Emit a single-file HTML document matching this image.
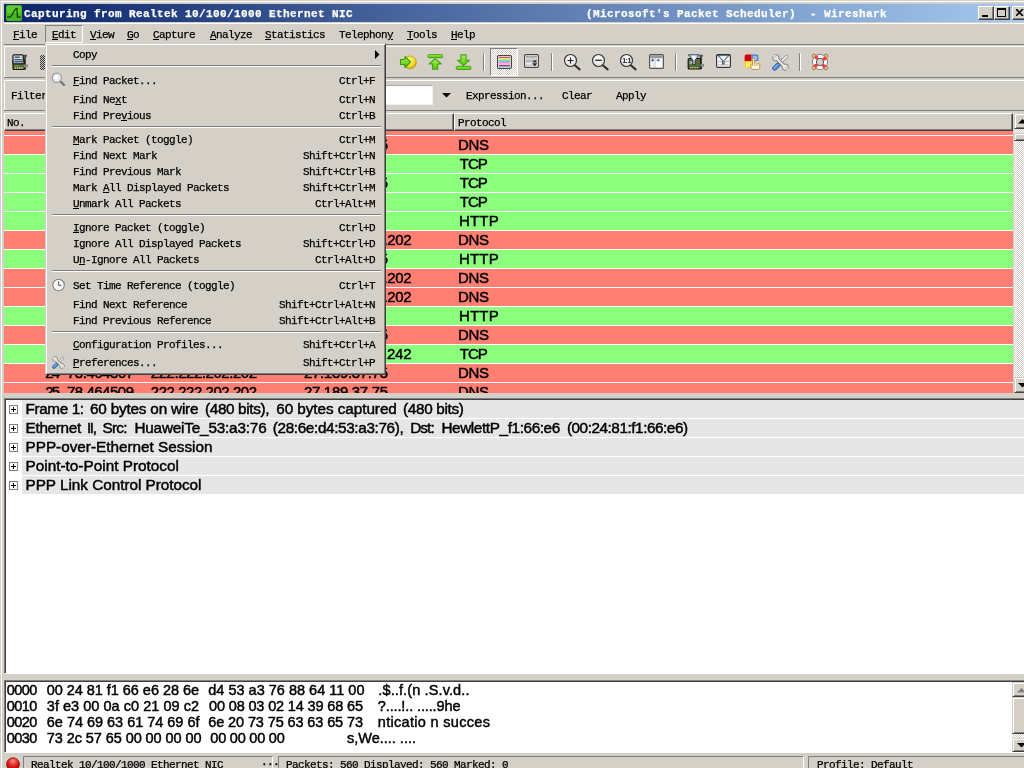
<!DOCTYPE html>
<html><head><meta charset="utf-8"><title>Wireshark</title>
<style>
*{box-sizing:border-box;margin:0;padding:0}
html,body{width:1024px;height:768px;overflow:hidden;background:#d4d0c8}
body{position:relative;font-family:"Liberation Mono",monospace;font-size:12px;color:#000}
.a{position:absolute}
.m{font-family:"Liberation Mono",monospace;font-size:11px;letter-spacing:-0.6px;white-space:pre;line-height:14px;-webkit-text-stroke:0.25px}
.s{font-family:"Liberation Sans",sans-serif;font-size:15px;white-space:pre;line-height:18px}
.h{font-family:"Liberation Sans",sans-serif;font-size:14.5px;white-space:pre;line-height:16px}
u{text-decoration:underline;text-underline-offset:1px}
.row{position:absolute;left:4px;width:1009px;height:18px}
.row span{position:absolute;top:0}
.s,.h{-webkit-text-stroke:0.45px #000}

.mi{position:absolute;left:72px;height:14px}
.sc{position:absolute;right:0;text-align:right}
.sep{position:absolute;left:5px;width:329px;height:2px;border-top:1px solid #808080;border-bottom:1px solid #fff}
.vsep{position:absolute;width:2px;height:22px;top:51px;border-left:1px solid #808080;border-right:1px solid #fff}
</style></head>
<body>
<div id="root" class="a" style="left:0;top:0;width:1024px;height:768px;overflow:hidden;will-change:transform">
<div class="a" style="left:1px;top:1px;width:1030px;height:1px;background:#fff"></div>
<div class="a" style="left:1px;top:1px;width:1px;height:767px;background:#fff"></div>
<div class="a" style="left:4px;top:4px;width:1024px;height:18px;background:linear-gradient(90deg,#0a246a,#a6caf0)"></div>
<svg class="a" style="left:6px;top:5px" width="16" height="16" viewBox="0 0 16 16"><rect x="0" y="0" width="16" height="16" rx="2" fill="#46b81f"/><rect x="1" y="1" width="14" height="7" rx="1" fill="#6fd63f" opacity=".6"/><path d="M1 12.2 L3.5 12.2 C6.5 12.2 7 4.5 11 3.4 L11.4 12.2 L15 12.2" fill="none" stroke="#103808" stroke-width="1.2" stroke-linejoin="round"/></svg>
<div class="a m" style="left:24px;top:7px;color:#fff;font-weight:bold;letter-spacing:0.4px">Capturing from Realtek 10/100/1000 Ethernet NIC</div>
<div class="a m" style="left:586px;top:7px;color:#fff;font-weight:bold;letter-spacing:0.4px">(Microsoft's Packet Scheduler)  - Wireshark</div>
<div class="a" style="left:978px;top:6px;width:16px;height:14px;background:#d4d0c8;border:1px solid;border-color:#fff #404040 #404040 #fff;box-shadow:inset -1px -1px 0 #808080"><div class="a" style="left:3px;top:8px;width:6px;height:2px;background:#000"></div></div>
<div class="a" style="left:994px;top:6px;width:16px;height:14px;background:#d4d0c8;border:1px solid;border-color:#fff #404040 #404040 #fff;box-shadow:inset -1px -1px 0 #808080"><div class="a" style="left:2px;top:1px;width:9px;height:9px;border:1px solid #000;border-top-width:2px"></div></div>
<div class="a" style="left:1012px;top:6px;width:16px;height:14px;background:#d4d0c8;border:1px solid;border-color:#fff #404040 #404040 #fff;box-shadow:inset -1px -1px 0 #808080"><svg class="a" style="left:3px;top:2px" width="8" height="7"><path d="M0 0L7 7M7 0L0 7" stroke="#000" stroke-width="1.6"/></svg></div>
<div class="a" style="left:4px;top:23px;width:1024px;height:1px;background:#fff"></div>
<div class="a" style="left:45px;top:25px;width:38px;height:18px;border:1px solid;border-color:#808080 #fff #fff #808080"></div>
<div class="a m" style="left:13px;top:28px"><u>F</u>ile</div>
<div class="a m" style="left:52px;top:28px"><u>E</u>dit</div>
<div class="a m" style="left:90px;top:28px"><u>V</u>iew</div>
<div class="a m" style="left:127px;top:28px"><u>G</u>o</div>
<div class="a m" style="left:153px;top:28px"><u>C</u>apture</div>
<div class="a m" style="left:210px;top:28px"><u>A</u>nalyze</div>
<div class="a m" style="left:265px;top:28px"><u>S</u>tatistics</div>
<div class="a m" style="left:339px;top:28px">Telephon<u>y</u></div>
<div class="a m" style="left:407px;top:28px"><u>T</u>ools</div>
<div class="a m" style="left:451px;top:28px"><u>H</u>elp</div>
<div class="a" style="left:4px;top:44px;width:1024px;height:1px;background:#808080"></div>
<div class="a" style="left:4px;top:46px;width:1024px;height:1px;background:#fff"></div>
<div class="a" style="left:4px;top:77px;width:1024px;height:1px;background:#808080"></div>
<div class="a" style="left:4px;top:80px;width:1024px;height:1px;background:#fff"></div>
<div class="a" style="left:4px;top:110px;width:1024px;height:1px;background:#808080"></div>
<div class="a" style="left:4px;top:113px;width:1024px;height:1px;background:#fff"></div>
<div class="a" style="left:4px;top:46px;width:1px;height:31px;background:#fff"></div>
<div class="a" style="left:4px;top:80px;width:1px;height:30px;background:#fff"></div>
<svg class="a" style="left:12px;top:54px" width="17" height="17" viewBox="0 0 17 17">
<path d="M11.5 1.5 L14.5 1 L14.5 2.5 L13.5 3 L13.5 15.5 L12.5 15.5 Z" fill="#555" stroke="#222" stroke-width=".6"/>
<rect x="1" y="6" width="11.5" height="9.5" rx="1" fill="#557244" stroke="#141c0e" stroke-width="1.2"/>
<rect x="12" y="10.5" width="4" height="3" fill="#8a8a8a"/>
<path d="M2.6 14H4M4.8 14H6.2M7 14H8.4M9.2 14H10.6" stroke="#e0cc50" stroke-width="1.3"/>
<rect x="2.5" y="10.5" width="5" height="1.5" fill="#7a8a4a"/>
<rect x="1" y="0.8" width="10.2" height="9" rx="1" fill="#fff" stroke="#111" stroke-width="1.2"/>
<rect x="2.6" y="2.4" width="5.2" height="1.8" fill="#555"/>
<rect x="8.6" y="2.4" width="1.2" height="1.8" fill="#888"/>
<rect x="2.2" y="5" width="8" height="1.5" fill="#2f5f9a"/>
<rect x="2.2" y="7.2" width="8" height="1.3" fill="#1c3d6a"/>
<rect x="11" y="8" width="1" height="1" fill="#d33"/>
</svg>
<div class="a" style="left:40px;top:55px;width:6px;height:15px;background:repeating-conic-gradient(#333 0% 25%,#ccc 0% 50%) 0 0/2px 2px"></div>
<svg class="a" style="left:399px;top:54px" width="19" height="17" viewBox="0 0 19 17">
<defs><radialGradient id="yg" cx=".4" cy=".35" r=".7"><stop offset="0" stop-color="#fff9a0"/><stop offset=".6" stop-color="#f0dc30"/><stop offset="1" stop-color="#c8a010"/></radialGradient>
<linearGradient id="gg" x1="0" y1="0" x2="0" y2="1"><stop offset="0" stop-color="#b8f070"/><stop offset=".5" stop-color="#7fd82a"/><stop offset="1" stop-color="#5cc010"/></linearGradient></defs>
<circle cx="11" cy="8.4" r="6.4" fill="url(#yg)" stroke="#c0a018" stroke-width=".8"/>
<path d="M1.5 5.5 L6 5.5 L6 2.5 L11.5 8 L6 13.5 L6 10.5 L1.5 10.5 Z" fill="url(#gg)" stroke="#3a9a08" stroke-width="1.1" stroke-linejoin="round"/>
</svg>
<svg class="a" style="left:427px;top:54px" width="17" height="17" viewBox="0 0 17 17">
<rect x="1" y=".7" width="14.5" height="3" rx=".6" fill="url(#gg)" stroke="#3fa30a" stroke-width="1"/>
<path d="M8.2 4.6 L14.3 10 L10.8 10 L10.8 15.3 L5.6 15.3 L5.6 10 L2.1 10 Z" fill="url(#gg)" stroke="#3fa30a" stroke-width="1.1" stroke-linejoin="round"/>
</svg>
<svg class="a" style="left:455px;top:54px" width="17" height="17" viewBox="0 0 17 17">
<rect x="1.3" y="12.4" width="14.5" height="3" rx=".6" fill="url(#gg)" stroke="#3fa30a" stroke-width="1"/>
<path d="M8.5 11.6 L14.6 6.2 L11.1 6.2 L11.1 .9 L5.9 .9 L5.9 6.2 L2.4 6.2 Z" fill="url(#gg)" stroke="#3fa30a" stroke-width="1.1" stroke-linejoin="round"/>
</svg>
<div class="a" style="left:483px;top:53px;width:2px;height:18px;border-left:1px solid #808080;border-right:1px solid #fff"></div>
<div class="a" style="left:551px;top:53px;width:2px;height:18px;border-left:1px solid #808080;border-right:1px solid #fff"></div>
<div class="a" style="left:675px;top:53px;width:2px;height:18px;border-left:1px solid #808080;border-right:1px solid #fff"></div>
<div class="a" style="left:799px;top:53px;width:2px;height:18px;border-left:1px solid #808080;border-right:1px solid #fff"></div>
<div class="a" style="left:490px;top:48px;width:28px;height:28px;background:repeating-conic-gradient(#fff 0% 25%,#d4d0c8 0% 50%) 0 0/2px 2px;border:1px solid;border-color:#808080 #fff #fff #808080"></div>
<svg class="a" style="left:497px;top:55px" width="15" height="14" viewBox="0 0 15 14">
<rect x=".6" y=".6" width="13.8" height="12.8" rx="1.2" fill="#fff" stroke="#444" stroke-width="1.2"/>
<rect x="2" y="2" width="11" height="1.3" fill="#d9534f"/>
<rect x="2" y="3.3" width="11" height="1.3" fill="#f0e060"/>
<rect x="2" y="4.6" width="11" height="1.4" fill="#7fd6a0"/>
<rect x="2" y="6" width="11" height="1.3" fill="#70c8d8"/>
<rect x="2" y="7.3" width="11" height="1.3" fill="#f070d0"/>
<rect x="2" y="8.6" width="11" height="1.4" fill="#ffb0f0"/>
<rect x="2" y="10" width="11" height="1" fill="#a04060"/>
<rect x="2" y="11" width="11" height="1" fill="#70c0c0"/>
</svg>
<svg class="a" style="left:524px;top:54px" width="15" height="14" viewBox="0 0 15 14">
<defs><linearGradient id="sg" x1="0" y1="0" x2="0" y2="1"><stop offset="0" stop-color="#999"/><stop offset=".3" stop-color="#ddd"/><stop offset=".5" stop-color="#aaa"/><stop offset=".75" stop-color="#e8e8e8"/><stop offset="1" stop-color="#bbb"/></linearGradient></defs>
<rect x=".6" y=".6" width="13.8" height="12.8" rx="1.2" fill="#fff" stroke="#444" stroke-width="1.2"/>
<rect x="2" y="2" width="11" height="10" fill="url(#sg)"/>
<path d="M8.5 6.5 L13 6.5 L10.8 8.6 Z M8.5 9.8 L13 9.8 L10.8 12.2 Z" fill="#222"/>
<rect x="8.5" y="8.6" width="4.5" height="1" fill="#222"/>
</svg>
<svg class="a" style="left:563px;top:53px" width="20" height="20" viewBox="0 0 20 20">
<defs><radialGradient id="mg" cx=".5" cy=".3" r=".8"><stop offset="0" stop-color="#fff"/><stop offset="1" stop-color="#d8dcd8"/></radialGradient></defs>
<path d="M11.5 12 L16.6 16.4" stroke="#333" stroke-width="2.2" stroke-linecap="round"/>
<circle cx="7.5" cy="7.5" r="6" fill="url(#mg)" stroke="#3a3a3a" stroke-width="1.2"/><path d="M4.5 7.5H10.5M7.5 4.5V10.5" stroke="#222" stroke-width="1.2"/></svg>
<svg class="a" style="left:591px;top:53px" width="20" height="20" viewBox="0 0 20 20">
<defs><radialGradient id="mg" cx=".5" cy=".3" r=".8"><stop offset="0" stop-color="#fff"/><stop offset="1" stop-color="#d8dcd8"/></radialGradient></defs>
<path d="M11.5 12 L16.6 16.4" stroke="#333" stroke-width="2.2" stroke-linecap="round"/>
<circle cx="7.5" cy="7.5" r="6" fill="url(#mg)" stroke="#3a3a3a" stroke-width="1.2"/><path d="M4.3 7.3H10.7" stroke="#222" stroke-width="1.3"/></svg>
<svg class="a" style="left:619px;top:53px" width="20" height="20" viewBox="0 0 20 20">
<defs><radialGradient id="mg" cx=".5" cy=".3" r=".8"><stop offset="0" stop-color="#fff"/><stop offset="1" stop-color="#d8dcd8"/></radialGradient></defs>
<path d="M11.5 12 L16.6 16.4" stroke="#333" stroke-width="2.2" stroke-linecap="round"/>
<circle cx="7.5" cy="7.5" r="6" fill="url(#mg)" stroke="#3a3a3a" stroke-width="1.2"/><text x="7.6" y="10" font-family="Liberation Sans,sans-serif" font-size="7" font-weight="bold" text-anchor="middle" fill="#222" letter-spacing="-.4">1:1</text></svg>
<svg class="a" style="left:649px;top:54px" width="15" height="15" viewBox="0 0 15 15">
<defs><linearGradient id="rg" x1="0" y1="0" x2="1" y2="0"><stop offset="0" stop-color="#fff"/><stop offset=".45" stop-color="#ddd"/><stop offset=".5" stop-color="#fff"/><stop offset="1" stop-color="#f4f4f4"/></linearGradient></defs>
<rect x=".6" y=".6" width="13.8" height="13.8" rx="1" fill="url(#rg)" stroke="#555" stroke-width="1.2"/>
<rect x="1.2" y="1.2" width="12.6" height="3" fill="#999"/>
<path d="M2 6.2H5.2M3.6 4.8V7.6M7.6 6.2H10.8M9.2 4.8V7.6" stroke="#3465a4" stroke-width="1"/>
</svg>
<svg class="a" style="left:687px;top:54px" width="18" height="16" viewBox="0 0 18 16">
<path d="M13 1.5 L15.5 1 L15.5 2.2 L14.6 2.6 L14.6 15 L13.6 15 Z" fill="#444" stroke="#222" stroke-width=".5"/>
<rect x="1.2" y="4.5" width="12.5" height="10.5" rx="1" fill="#4f6b40" stroke="#141c0e" stroke-width="1.2"/>
<rect x="13.5" y="10" width="3.5" height="2.6" fill="#888"/>
<path d="M3 13.6H4.4M5.2 13.6H6.6M7.4 13.6H8.8M9.6 13.6H11" stroke="#e0cc50" stroke-width="1.2"/>
<rect x="9.5" y="7" width="1" height="1.5" fill="#d43"/><rect x="11.3" y="7" width="1" height="1.5" fill="#d43"/>
<rect x="2.5" y="7" width="3" height="3" fill="#9aa"/>
<defs><linearGradient id="fg" x1="0" y1="0" x2="1" y2="0"><stop offset="0" stop-color="#9fc4ea"/><stop offset=".5" stop-color="#fff"/><stop offset="1" stop-color="#8fb8e4"/></linearGradient></defs>
<path d="M1.5 .8 L12.5 .8 L8 6.2 L8 10.5 L6 10.5 L6 6.2 Z" fill="url(#fg)" stroke="#234" stroke-width=".9" stroke-linejoin="round"/>
</svg>
<svg class="a" style="left:716px;top:54px" width="15" height="14" viewBox="0 0 15 14">
<rect x=".6" y=".6" width="13.8" height="12.8" rx="1.2" fill="#fff" stroke="#333" stroke-width="1.2"/>
<rect x="2" y="6.5" width="11" height="2" fill="#c8c8c8"/><rect x="2" y="10" width="11" height="1.6" fill="#ccc"/>
<path d="M1.6 1.2 L13.4 1.2 L8 6.6 L8 10.2 L6.6 10.2 L6.6 6.6 Z" fill="url(#fg)" stroke="#234" stroke-width=".9" stroke-linejoin="round"/>
</svg>
<svg class="a" style="left:744px;top:54px" width="17" height="16" viewBox="0 0 17 16">
<rect x=".4" y=".4" width="14.2" height="13.6" rx="1.8" fill="#fff" stroke="#bbb" stroke-width=".5"/>
<path d="M.6 2.4 Q.6 .6 2.4 .6 L7.5 .6 L7.5 7.3 L.6 7.3 Z" fill="#d40000"/>
<path d="M7.5 .6 L12.8 .6 Q14.4 .6 14.4 2.4 L14.4 7.3 L7.5 7.3 Z" fill="#3a78c8"/>
<rect x="8.6" y="1.7" width="4.7" height="4.6" fill="#9cc0ec"/>
<path d="M.6 7.3 L7.5 7.3 L7.5 13.8 L2.4 13.8 Q.6 13.8 .6 12 Z" fill="#f0d000"/>
<rect x="1.7" y="8.4" width="4.7" height="4.4" fill="#f8ec70"/>
<path d="M8.3 15.4 Q6 12.4 6.6 11.2 Q7.4 10.4 8.4 11.6 L8.4 5.4 Q8.4 4.2 9.4 4.2 Q10.4 4.2 10.4 5.4 L10.4 8.8 Q11.4 8.2 12.2 9 Q13.2 8.6 13.9 9.5 Q15 9.2 15.8 10.4 L15.8 12.8 Q15.8 14.4 14.8 15.4 Z" fill="#fff" stroke="#d08820" stroke-width="1"/>
<path d="M10.4 9.2V12M12.2 9.6V12M13.9 10V12" stroke="#d08820" stroke-width=".7"/>
</svg>
<svg class="a" style="left:772px;top:54px" width="17" height="17" viewBox="0 0 17 17">
<path d="M6.5 10.5 L14.6 2.4" stroke="#8a8a86" stroke-width="3" stroke-linecap="round"/>
<path d="M6.5 10.5 L14.6 2.4" stroke="#f4f4f2" stroke-width="1.6" stroke-linecap="round"/>
<path d="M2.6 14.4 L6 11" stroke="#2a5aa0" stroke-width="4.6" stroke-linecap="round"/>
<path d="M2.6 14.4 L6 11" stroke="#4f8ee0" stroke-width="3" stroke-linecap="round"/>
<path d="M2.4 13.6 L5.2 10.8" stroke="#a8c8f4" stroke-width="1" stroke-linecap="round"/>
<path d="M4.5 4.5 L12.8 12.8" stroke="#7c7c78" stroke-width="4"/>
<circle cx="3.8" cy="3.8" r="3.2" fill="#e8e8e4" stroke="#7c7c78" stroke-width="1"/>
<circle cx="13.2" cy="13.2" r="3.2" fill="#e8e8e4" stroke="#7c7c78" stroke-width="1"/>
<path d="M4.5 4.5 L12.8 12.8" stroke="#e8e8e4" stroke-width="2.2"/>
<rect x="-1.3" y="-4.4" width="2.6" height="4.2" fill="#d4d0c8" transform="translate(3.8 3.8) rotate(-45)"/>
<rect x="-1.3" y="-4.4" width="2.6" height="4.2" fill="#d4d0c8" transform="translate(13.2 13.2) rotate(135)"/>
</svg>
<svg class="a" style="left:811px;top:53px" width="18" height="18" viewBox="0 0 18 18">
<circle cx="3" cy="3" r="1.8" fill="none" stroke="#b87818" stroke-width="1"/><circle cx="15" cy="3" r="1.8" fill="none" stroke="#b87818" stroke-width="1"/>
<circle cx="3" cy="15" r="1.8" fill="none" stroke="#b87818" stroke-width="1"/><circle cx="15" cy="15" r="1.8" fill="none" stroke="#b87818" stroke-width="1"/>
<circle cx="9" cy="9" r="7.6" fill="#fff" stroke="#777" stroke-width=".9"/>
<circle cx="9" cy="9" r="5.6" fill="none" stroke="#ff3838" stroke-width="3.4" stroke-dasharray="3.2 5.6" stroke-dashoffset="-2.8"/>
<circle cx="9" cy="9" r="3.7" fill="#d4d0c8" stroke="#555" stroke-width="1"/>
</svg>
<div class="a m" style="left:11px;top:89px">Filter:</div>
<div class="a" style="left:60px;top:85px;width:373px;height:20px;background:#fff;border:1px solid;border-color:#a8a8a8 #f0f0f0 #f0f0f0 #a8a8a8"></div>
<svg class="a" style="left:442px;top:93px" width="9" height="5"><path d="M0 0H9L4.5 4.5Z" fill="#000"/></svg>
<div class="a m" style="left:466px;top:89px">Expression...</div>
<div class="a m" style="left:562px;top:89px">Clear</div>
<div class="a m" style="left:616px;top:89px">Apply</div>
<div class="a" style="left:4px;top:113px;width:450px;height:18px;background:#d4d0c8;border:1px solid;border-color:#fff #404040 #404040 #fff;box-shadow:inset -1px -1px 0 #808080"></div>
<div class="a" style="left:454px;top:113px;width:559px;height:18px;background:#d4d0c8;border:1px solid;border-color:#fff #404040 #404040 #fff;box-shadow:inset -1px -1px 0 #808080"></div>
<div class="a m" style="left:7px;top:116px">No.</div>
<div class="a m" style="left:458px;top:116px">Protocol</div>
<div class="a" style="left:4px;top:131px;width:1009px;height:262px;background:#fff;overflow:hidden">
<div class="row" style="left:0;top:-14px;background:#ff7f73"></div>
<div class="row" style="left:0;top:5px;background:#ff7f73"><span class="a s" style="left:41.3px;top:0px;font-size:15px;letter-spacing:-2.0px">12</span><span class="a s" style="left:63.0px;top:0px;font-size:15px;letter-spacing:-0.35px">42.183711</span><span class="a s" style="left:146.8px;top:0px;font-size:15px;letter-spacing:-0.457px">222.222.202.202</span><span class="a s" style="left:300.0px;top:0px;font-size:15px;letter-spacing:-0.327px">27.189.37.75</span><span class="a s" style="left:454.0px;top:0px;font-size:15px;letter-spacing:-0.325px">DNS</span></div>
<div class="row" style="left:0;top:24px;background:#8cff7f"><span class="a s" style="left:41.3px;top:0px;font-size:15px;letter-spacing:-2.0px">13</span><span class="a s" style="left:63.0px;top:0px;font-size:15px;letter-spacing:-0.488px">42.301456</span><span class="a s" style="left:146.8px;top:0px;font-size:15px;letter-spacing:-0.418px">27.189.37.75</span><span class="a s" style="left:300.0px;top:0px;font-size:15px;letter-spacing:-0.322px">60.28.1.38</span><span class="a s" style="left:455.7px;top:0px;font-size:15px;letter-spacing:-0.95px">TCP</span></div>
<div class="row" style="left:0;top:43px;background:#8cff7f"><span class="a s" style="left:41.3px;top:0px;font-size:15px;letter-spacing:-2.0px">14</span><span class="a s" style="left:63.0px;top:0px;font-size:15px;letter-spacing:-0.488px">42.351020</span><span class="a s" style="left:146.8px;top:0px;font-size:15px;letter-spacing:-0.342px">123.125.114.38</span><span class="a s" style="left:300.0px;top:0px;font-size:15px;letter-spacing:-0.327px">27.189.37.75</span><span class="a s" style="left:455.7px;top:0px;font-size:15px;letter-spacing:-0.95px">TCP</span></div>
<div class="row" style="left:0;top:62px;background:#8cff7f"><span class="a s" style="left:41.3px;top:0px;font-size:15px;letter-spacing:-2.0px">15</span><span class="a s" style="left:63.0px;top:0px;font-size:15px;letter-spacing:-0.35px">42.351101</span><span class="a s" style="left:146.8px;top:0px;font-size:15px;letter-spacing:-0.418px">27.189.37.75</span><span class="a s" style="left:300.0px;top:0px;font-size:15px;letter-spacing:-0.322px">60.28.1.38</span><span class="a s" style="left:455.7px;top:0px;font-size:15px;letter-spacing:-0.95px">TCP</span></div>
<div class="row" style="left:0;top:81px;background:#8cff7f"><span class="a s" style="left:41.3px;top:0px;font-size:15px;letter-spacing:-2.0px">16</span><span class="a s" style="left:63.0px;top:0px;font-size:15px;letter-spacing:-0.488px">42.351502</span><span class="a s" style="left:146.8px;top:0px;font-size:15px;letter-spacing:-0.418px">27.189.37.75</span><span class="a s" style="left:300.0px;top:0px;font-size:15px;letter-spacing:-0.322px">60.28.1.38</span><span class="a s" style="left:455.0px;top:0px;font-size:15px;letter-spacing:0.183px">HTTP</span></div>
<div class="row" style="left:0;top:100px;background:#ff7f73"><span class="a s" style="left:41.3px;top:0px;font-size:15px;letter-spacing:-2.0px">17</span><span class="a s" style="left:63.0px;top:0px;font-size:15px;letter-spacing:-0.488px">42.399760</span><span class="a s" style="left:146.8px;top:0px;font-size:15px;letter-spacing:-0.418px">27.189.37.75</span><span class="a s" style="left:300.0px;top:0px;font-size:15px;letter-spacing:-0.364px">222.222.202.202</span><span class="a s" style="left:454.0px;top:0px;font-size:15px;letter-spacing:-0.325px">DNS</span></div>
<div class="row" style="left:0;top:119px;background:#8cff7f"><span class="a s" style="left:41.3px;top:0px;font-size:15px;letter-spacing:-2.0px">18</span><span class="a s" style="left:63.0px;top:0px;font-size:15px;letter-spacing:-0.488px">42.480122</span><span class="a s" style="left:146.8px;top:0px;font-size:15px;letter-spacing:-0.342px">123.125.114.38</span><span class="a s" style="left:300.0px;top:0px;font-size:15px;letter-spacing:-0.327px">27.189.37.75</span><span class="a s" style="left:455.0px;top:0px;font-size:15px;letter-spacing:0.183px">HTTP</span></div>
<div class="row" style="left:0;top:138px;background:#ff7f73"><span class="a s" style="left:41.3px;top:0px;font-size:15px;letter-spacing:-2.0px">19</span><span class="a s" style="left:63.0px;top:0px;font-size:15px;letter-spacing:-0.35px">60.114020</span><span class="a s" style="left:146.8px;top:0px;font-size:15px;letter-spacing:-0.418px">27.189.37.75</span><span class="a s" style="left:300.0px;top:0px;font-size:15px;letter-spacing:-0.364px">222.222.202.202</span><span class="a s" style="left:454.0px;top:0px;font-size:15px;letter-spacing:-0.325px">DNS</span></div>
<div class="row" style="left:0;top:157px;background:#ff7f73"><span class="a s" style="left:41.3px;top:0px;font-size:15px;letter-spacing:-2.0px">20</span><span class="a s" style="left:63.0px;top:0px;font-size:15px;letter-spacing:-0.35px">60.114377</span><span class="a s" style="left:146.8px;top:0px;font-size:15px;letter-spacing:-0.418px">27.189.37.75</span><span class="a s" style="left:300.0px;top:0px;font-size:15px;letter-spacing:-0.364px">222.222.202.202</span><span class="a s" style="left:454.0px;top:0px;font-size:15px;letter-spacing:-0.325px">DNS</span></div>
<div class="row" style="left:0;top:176px;background:#8cff7f"><span class="a s" style="left:41.3px;top:0px;font-size:15px;letter-spacing:-2.0px">21</span><span class="a s" style="left:63.0px;top:0px;font-size:15px;letter-spacing:-0.488px">60.210034</span><span class="a s" style="left:146.8px;top:0px;font-size:15px;letter-spacing:-0.418px">27.189.37.75</span><span class="a s" style="left:300.0px;top:0px;font-size:15px;letter-spacing:-0.322px">60.28.1.38</span><span class="a s" style="left:455.0px;top:0px;font-size:15px;letter-spacing:0.183px">HTTP</span></div>
<div class="row" style="left:0;top:195px;background:#ff7f73"><span class="a s" style="left:41.3px;top:0px;font-size:15px;letter-spacing:-2.0px">22</span><span class="a s" style="left:63.0px;top:0px;font-size:15px;letter-spacing:-0.488px">60.215509</span><span class="a s" style="left:146.8px;top:0px;font-size:15px;letter-spacing:-0.457px">222.222.202.202</span><span class="a s" style="left:300.0px;top:0px;font-size:15px;letter-spacing:-0.327px">27.189.37.75</span><span class="a s" style="left:454.0px;top:0px;font-size:15px;letter-spacing:-0.325px">DNS</span></div>
<div class="row" style="left:0;top:214px;background:#8cff7f"><span class="a s" style="left:41.3px;top:0px;font-size:15px;letter-spacing:-2.0px">23</span><span class="a s" style="left:63.0px;top:0px;font-size:15px;letter-spacing:-0.488px">60.301245</span><span class="a s" style="left:146.8px;top:0px;font-size:15px;letter-spacing:-0.418px">27.189.37.75</span><span class="a s" style="left:300.0px;top:0px;font-size:15px;letter-spacing:-0.286px">123.125.114.242</span><span class="a s" style="left:455.7px;top:0px;font-size:15px;letter-spacing:-0.95px">TCP</span></div>
<div class="row" style="left:0;top:233px;background:#ff7f73"><span class="a s" style="left:41.3px;top:0px;font-size:15px;letter-spacing:-2.0px">24</span><span class="a s" style="left:63.0px;top:0px;font-size:15px;letter-spacing:-0.488px">78.464367</span><span class="a s" style="left:146.8px;top:0px;font-size:15px;letter-spacing:-0.457px">222.222.202.202</span><span class="a s" style="left:300.0px;top:0px;font-size:15px;letter-spacing:-0.327px">27.189.37.75</span><span class="a s" style="left:454.0px;top:0px;font-size:15px;letter-spacing:-0.325px">DNS</span></div>
<div class="row" style="left:0;top:252px;background:#ff7f73"><span class="a s" style="left:41.3px;top:0px;font-size:15px;letter-spacing:-2.0px">25</span><span class="a s" style="left:63.0px;top:0px;font-size:15px;letter-spacing:-0.488px">78.464509</span><span class="a s" style="left:146.8px;top:0px;font-size:15px;letter-spacing:-0.457px">222.222.202.202</span><span class="a s" style="left:300.0px;top:0px;font-size:15px;letter-spacing:-0.327px">27.189.37.75</span><span class="a s" style="left:454.0px;top:0px;font-size:15px;letter-spacing:-0.325px">DNS</span></div>
</div>
<div class="a" style="left:1014px;top:113px;width:16px;height:280px;background:repeating-conic-gradient(#fff 0% 25%,#d4d0c8 0% 50%) 0 0/2px 2px"></div>
<div class="a" style="left:1014px;top:113px;width:16px;height:16px;background:#d4d0c8;border:1px solid;border-color:#d4d0c8 #404040 #404040 #d4d0c8;box-shadow:inset 1px 1px 0 #fff,inset -1px -1px 0 #808080"><svg class="a" style="left:3px;top:5px" width="9" height="5"><path d="M0 4.5L4.5 0L9 4.5Z" fill="#000"/></svg></div>
<div class="a" style="left:1014px;top:133px;width:16px;height:8px;background:#d4d0c8;border:1px solid;border-color:#d4d0c8 #404040 #404040 #d4d0c8;box-shadow:inset 1px 1px 0 #fff,inset -1px -1px 0 #808080"></div>
<div class="a" style="left:1014px;top:377px;width:16px;height:16px;background:#d4d0c8;border:1px solid;border-color:#d4d0c8 #404040 #404040 #d4d0c8;box-shadow:inset 1px 1px 0 #fff,inset -1px -1px 0 #808080"><svg class="a" style="left:3px;top:5px" width="9" height="5"><path d="M0 0H9L4.5 4.5Z" fill="#000"/></svg></div>
<div class="a" style="left:4px;top:398px;width:1030px;height:276px;background:#fff;border:1px solid;border-color:#808080 #fff #fff #808080;box-shadow:inset 1px 1px 0 #404040"></div>
<div class="a" style="left:22px;top:400px;width:1010px;height:18px;background:#e6e6e6"></div>
<div class="a" style="left:9px;top:405px;width:9px;height:9px;background:#fff;border:1px solid #808080"><div class="a" style="left:1px;top:3px;width:5px;height:1px;background:#000"></div><div class="a" style="left:3px;top:1px;width:1px;height:5px;background:#000"></div></div>
<span class="a s" style="left:25.6px;top:400px;font-size:15.3px;letter-spacing:-0.4px">Frame 1:</span>
<span class="a s" style="left:90.0px;top:400px;font-size:15.3px;letter-spacing:-0.193px">60 bytes on wire</span>
<span class="a s" style="left:205.0px;top:400px;font-size:15.3px;letter-spacing:-0.355px">(480 bits),</span>
<span class="a s" style="left:276.25px;top:400px;font-size:15.3px;letter-spacing:-0.063px">60 bytes captured</span>
<span class="a s" style="left:403.1px;top:400px;font-size:15.3px;letter-spacing:-0.322px">(480 bits)</span>
<div class="a" style="left:22px;top:419px;width:1010px;height:18px;background:#e6e6e6"></div>
<div class="a" style="left:9px;top:424px;width:9px;height:9px;background:#fff;border:1px solid #808080"><div class="a" style="left:1px;top:3px;width:5px;height:1px;background:#000"></div><div class="a" style="left:3px;top:1px;width:1px;height:5px;background:#000"></div></div>
<span class="a s" style="left:25.6px;top:419px;font-size:15.3px;letter-spacing:-0.314px">Ethernet</span>
<span class="a s" style="left:86.9px;top:419px;font-size:15.3px;letter-spacing:-1.375px">II,</span>
<span class="a s" style="left:102.5px;top:419px;font-size:15.3px;letter-spacing:-0.733px">Src:</span>
<span class="a s" style="left:134.4px;top:419px;font-size:15.3px;letter-spacing:-0.184px">HuaweiTe_53:a3:76</span>
<span class="a s" style="left:272.8px;top:419px;font-size:15.3px;letter-spacing:-0.361px">(28:6e:d4:53:a3:76),</span>
<span class="a s" style="left:410.2px;top:419px;font-size:15.3px;letter-spacing:-0.9px">Dst:</span>
<span class="a s" style="left:441.4px;top:419px;font-size:15.3px;letter-spacing:-0.384px">HewlettP_f1:66:e6</span>
<span class="a s" style="left:566.9px;top:419px;font-size:15.3px;letter-spacing:-0.45px">(00:24:81:f1:66:e6)</span>
<div class="a" style="left:22px;top:438px;width:1010px;height:18px;background:#e6e6e6"></div>
<div class="a" style="left:9px;top:443px;width:9px;height:9px;background:#fff;border:1px solid #808080"><div class="a" style="left:1px;top:3px;width:5px;height:1px;background:#000"></div><div class="a" style="left:3px;top:1px;width:1px;height:5px;background:#000"></div></div>
<span class="a s" style="left:25.5px;top:438px;font-size:15.3px;letter-spacing:-0.004px">PPP-over-Ethernet Session</span>
<div class="a" style="left:22px;top:457px;width:1010px;height:18px;background:#e6e6e6"></div>
<div class="a" style="left:9px;top:462px;width:9px;height:9px;background:#fff;border:1px solid #808080"><div class="a" style="left:1px;top:3px;width:5px;height:1px;background:#000"></div><div class="a" style="left:3px;top:1px;width:1px;height:5px;background:#000"></div></div>
<span class="a s" style="left:25.5px;top:457px;font-size:15.3px;letter-spacing:0.018px">Point-to-Point Protocol</span>
<div class="a" style="left:22px;top:476px;width:1010px;height:18px;background:#e6e6e6"></div>
<div class="a" style="left:9px;top:481px;width:9px;height:9px;background:#fff;border:1px solid #808080"><div class="a" style="left:1px;top:3px;width:5px;height:1px;background:#000"></div><div class="a" style="left:3px;top:1px;width:1px;height:5px;background:#000"></div></div>
<span class="a s" style="left:25.5px;top:476px;font-size:15.3px;letter-spacing:-0.025px">PPP Link Control Protocol</span>
<div class="a" style="left:4px;top:680px;width:1030px;height:73px;background:#fff;border:1px solid;border-color:#808080 #fff #fff #808080;box-shadow:inset 1px 1px 0 #404040"></div>
<span class="a h" style="left:6.7px;top:682px;font-size:14.5px;letter-spacing:-0.55px">0000</span>
<span class="a h" style="left:46.8px;top:682px;font-size:14.5px;letter-spacing:-0.045px">00 24 81 f1 66 e6 28 6e</span>
<span class="a h" style="left:208.3px;top:682px;font-size:14.5px;letter-spacing:0.002px">d4 53 a3 76 88 64 11 00</span>
<span class="a h" style="left:378.3px;top:682px;font-size:14.5px;letter-spacing:0.125px">.$..f.(n .S.v.d..</span>
<span class="a h" style="left:6.7px;top:698px;font-size:14.5px;letter-spacing:-0.55px">0010</span>
<span class="a h" style="left:46.8px;top:698px;font-size:14.5px;letter-spacing:0.03px">3f e3 00 0a c0 21 09 c2</span>
<span class="a h" style="left:209.0px;top:698px;font-size:14.5px;letter-spacing:-0.148px">00 08 03 02 14 39 68 65</span>
<span class="a h" style="left:377.8px;top:698px;font-size:14.5px;letter-spacing:-0.122px">?....!.. .....9he</span>
<span class="a h" style="left:6.7px;top:714px;font-size:14.5px;letter-spacing:-0.55px">0020</span>
<span class="a h" style="left:46.8px;top:714px;font-size:14.5px;letter-spacing:-0.023px">6e 74 69 63 61 74 69 6f</span>
<span class="a h" style="left:208.3px;top:714px;font-size:14.5px;letter-spacing:-0.116px">6e 20 73 75 63 63 65 73</span>
<span class="a h" style="left:377.8px;top:714px;font-size:14.5px;letter-spacing:0.312px">nticatio n succes</span>
<span class="a h" style="left:6.7px;top:730px;font-size:14.5px;letter-spacing:-0.55px">0030</span>
<span class="a h" style="left:46.8px;top:730px;font-size:14.5px;letter-spacing:-0.077px">73 2c 57 65 00 00 00 00</span>
<span class="a h" style="left:210.3px;top:730px;font-size:14.5px;letter-spacing:-0.22px">00 00 00 00</span>
<span class="a h" style="left:347.0px;top:730px;font-size:14.5px;letter-spacing:-0.004px">s,We.... ....</span>
<div class="a" style="left:1012px;top:682px;width:18px;height:70px;background:repeating-conic-gradient(#fff 0% 25%,#d4d0c8 0% 50%) 0 0/2px 2px"></div>
<div class="a" style="left:1012px;top:682px;width:18px;height:15px;background:#d4d0c8;border:1px solid;border-color:#d4d0c8 #404040 #404040 #d4d0c8;box-shadow:inset 1px 1px 0 #fff,inset -1px -1px 0 #808080"><svg class="a" style="left:4px;top:5px" width="9" height="5"><path d="M0 4.5L4.5 0L9 4.5Z" fill="#808080"/></svg></div>
<div class="a" style="left:1012px;top:697px;width:18px;height:37px;background:#d4d0c8;border:1px solid;border-color:#d4d0c8 #404040 #404040 #d4d0c8;box-shadow:inset 1px 1px 0 #fff,inset -1px -1px 0 #808080"></div>
<div class="a" style="left:1012px;top:738px;width:18px;height:14px;background:#d4d0c8;border:1px solid;border-color:#d4d0c8 #404040 #404040 #d4d0c8;box-shadow:inset 1px 1px 0 #fff,inset -1px -1px 0 #808080"><svg class="a" style="left:4px;top:4px" width="9" height="5"><path d="M0 0H9L4.5 4.5Z" fill="#000"/></svg></div>
<div class="a" style="left:23px;top:756px;width:250px;height:20px;border:1px solid;border-color:#808080 #fff #fff #808080"></div>
<div class="a" style="left:278px;top:756px;width:526px;height:20px;border:1px solid;border-color:#808080 #fff #fff #808080"></div>
<div class="a" style="left:808px;top:756px;width:230px;height:20px;border:1px solid;border-color:#808080 #fff #fff #808080"></div>
<svg class="a" style="left:5px;top:756px" width="16" height="16"><defs><radialGradient id="rc" cx=".5" cy=".25" r=".8"><stop offset="0" stop-color="#ff8a80"/><stop offset=".5" stop-color="#e02020"/><stop offset="1" stop-color="#a00000"/></radialGradient></defs><circle cx="8" cy="8.2" r="6.4" fill="url(#rc)" stroke="#800" stroke-width=".8"/></svg>
<div class="a m" style="left:31px;top:758px">Realtek 10/100/1000 Ethernet NIC</div>
<div class="a m" style="left:261px;top:755px;font-weight:bold">...</div>
<div class="a m" style="left:286px;top:758px">Packets: 560 Displayed: 560 Marked: 0</div>
<div class="a m" style="left:817px;top:758px">Profile: Default</div>
<div class="a" style="left:45px;top:43px;width:341px;height:332px;background:#d4d0c8;border:1px solid;border-color:#d4d0c8 #404040 #404040 #d4d0c8;box-shadow:inset 1px 1px 0 #fff,inset -1px -1px 0 #808080"><div class="a" style="left:1px;top:1px;width:338px;height:330px">
<div class="a m" style="left:26px;top:3px">Copy</div>
<div class="sep" style="top:20px"></div>
<div class="a m" style="left:26px;top:29px"><u>F</u>ind Packet...</div>
<div class="a m" style="right:10px;top:29px">Ctrl+F</div>
<div class="a m" style="left:26px;top:48px">Find Ne<u>x</u>t</div>
<div class="a m" style="right:10px;top:48px">Ctrl+N</div>
<div class="a m" style="left:26px;top:64px">Find Pre<u>v</u>ious</div>
<div class="a m" style="right:10px;top:64px">Ctrl+B</div>
<div class="sep" style="top:81px"></div>
<div class="a m" style="left:26px;top:88px"><u>M</u>ark Packet (toggle)</div>
<div class="a m" style="right:10px;top:88px">Ctrl+M</div>
<div class="a m" style="left:26px;top:104px">Find Next Mark</div>
<div class="a m" style="right:10px;top:104px">Shift+Ctrl+N</div>
<div class="a m" style="left:26px;top:120px">Find Previous Mark</div>
<div class="a m" style="right:10px;top:120px">Shift+Ctrl+B</div>
<div class="a m" style="left:26px;top:136px">Mark <u>A</u>ll Displayed Packets</div>
<div class="a m" style="right:10px;top:136px">Shift+Ctrl+M</div>
<div class="a m" style="left:26px;top:152px"><u>U</u>nmark All Packets</div>
<div class="a m" style="right:10px;top:152px">Ctrl+Alt+M</div>
<div class="sep" style="top:169px"></div>
<div class="a m" style="left:26px;top:176px"><u>I</u>gnore Packet (toggle)</div>
<div class="a m" style="right:10px;top:176px">Ctrl+D</div>
<div class="a m" style="left:26px;top:192px">Ignore All Displayed Packets</div>
<div class="a m" style="right:10px;top:192px">Shift+Ctrl+D</div>
<div class="a m" style="left:26px;top:208px">U<u>n</u>-Ignore All Packets</div>
<div class="a m" style="right:10px;top:208px">Ctrl+Alt+D</div>
<div class="sep" style="top:225px"></div>
<div class="a m" style="left:26px;top:234px">Set Time Reference (toggle)</div>
<div class="a m" style="right:10px;top:234px">Ctrl+T</div>
<div class="a m" style="left:26px;top:253px">Find Next Reference</div>
<div class="a m" style="right:10px;top:253px">Shift+Ctrl+Alt+N</div>
<div class="a m" style="left:26px;top:269px">Find Previous Reference</div>
<div class="a m" style="right:10px;top:269px">Shift+Ctrl+Alt+B</div>
<div class="sep" style="top:286px"></div>
<div class="a m" style="left:26px;top:293px"><u>C</u>onfiguration Profiles...</div>
<div class="a m" style="right:10px;top:293px">Shift+Ctrl+A</div>
<div class="a m" style="left:26px;top:311px"><u>P</u>references...</div>
<div class="a m" style="right:10px;top:311px">Shift+Ctrl+P</div>
<svg class="a" style="left:328px;top:4.5px" width="5" height="9"><path d="M0 0L4.5 4.5L0 9Z" fill="#000"/></svg>
<svg class="a" style="left:4px;top:27px" width="16" height="16" viewBox="0 0 16 16"><path d="M8.5 8.5L13 13" stroke="#777" stroke-width="2.4" stroke-linecap="round"/><circle cx="5.8" cy="5.8" r="4.6" fill="#e8eef4" stroke="#9a9a9a" stroke-width="1.2"/><circle cx="5" cy="5" r="2" fill="#fff" opacity=".8"/></svg>
<svg class="a" style="left:5px;top:232px" width="16" height="16" viewBox="0 0 16 16"><circle cx="6.6" cy="8" r="5.7" fill="#f6f6f6" stroke="#808080" stroke-width="1.1"/><path d="M6.6 4.4V8.3H9.4" fill="none" stroke="#505050" stroke-width="1"/></svg>
</div></div>
<svg class="a" style="left:52px;top:356px" width="13" height="13" viewBox="0 0 17 17">
<path d="M6.5 10.5 L14.6 2.4" stroke="#8a8a86" stroke-width="3" stroke-linecap="round"/>
<path d="M6.5 10.5 L14.6 2.4" stroke="#f4f4f2" stroke-width="1.6" stroke-linecap="round"/>
<path d="M2.6 14.4 L6 11" stroke="#2a5aa0" stroke-width="4.6" stroke-linecap="round"/>
<path d="M2.6 14.4 L6 11" stroke="#4f8ee0" stroke-width="3" stroke-linecap="round"/>
<path d="M2.4 13.6 L5.2 10.8" stroke="#a8c8f4" stroke-width="1" stroke-linecap="round"/>
<path d="M4.5 4.5 L12.8 12.8" stroke="#7c7c78" stroke-width="4"/>
<circle cx="3.8" cy="3.8" r="3.2" fill="#e8e8e4" stroke="#7c7c78" stroke-width="1"/>
<circle cx="13.2" cy="13.2" r="3.2" fill="#e8e8e4" stroke="#7c7c78" stroke-width="1"/>
<path d="M4.5 4.5 L12.8 12.8" stroke="#e8e8e4" stroke-width="2.2"/>
<rect x="-1.3" y="-4.4" width="2.6" height="4.2" fill="#d4d0c8" transform="translate(3.8 3.8) rotate(-45)"/>
<rect x="-1.3" y="-4.4" width="2.6" height="4.2" fill="#d4d0c8" transform="translate(13.2 13.2) rotate(135)"/>
</svg>
</div>
</body></html>
